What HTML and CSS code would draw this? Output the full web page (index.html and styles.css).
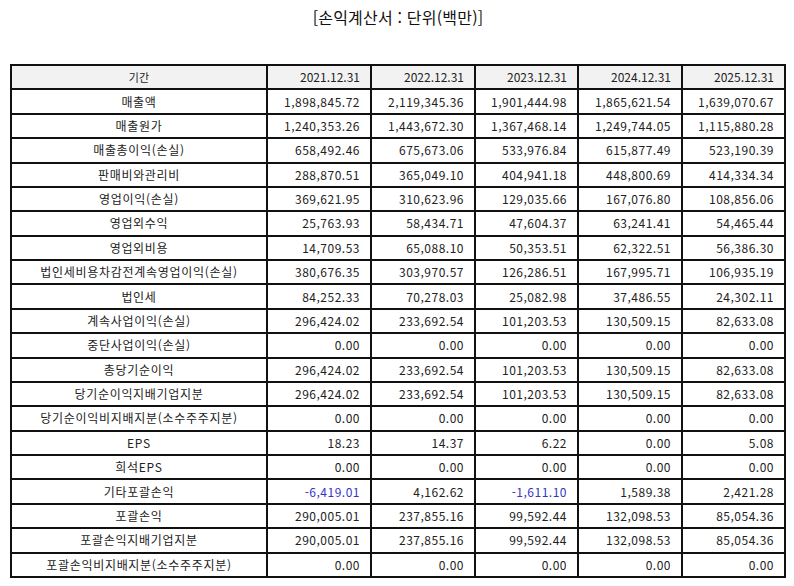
FILE: index.html
```html
<!DOCTYPE html>
<html lang="ko">
<head>
<meta charset="utf-8">
<title>손익계산서</title>
<link rel="stylesheet" href="styles.css">
</head>
<body>
<div class="page">
  <h1 class="title">[손익계산서 : 단위(백만)]</h1>
  <table class="fin">
    <colgroup>
      <col class="c-label"><col class="c-a"><col class="c-a"><col class="c-b"><col class="c-a"><col class="c-b">
    </colgroup>
    <thead>
      <tr class="head"><th>기간</th><th class="num">2021.12.31</th><th class="num">2022.12.31</th><th class="num">2023.12.31</th><th class="num">2024.12.31</th><th class="num">2025.12.31</th></tr>
    </thead>
    <tbody>
      <tr><td>매출액</td><td class="num">1,898,845.72</td><td class="num">2,119,345.36</td><td class="num">1,901,444.98</td><td class="num">1,865,621.54</td><td class="num">1,639,070.67</td></tr>
      <tr><td>매출원가</td><td class="num">1,240,353.26</td><td class="num">1,443,672.30</td><td class="num">1,367,468.14</td><td class="num">1,249,744.05</td><td class="num">1,115,880.28</td></tr>
      <tr><td>매출총이익(손실)</td><td class="num">658,492.46</td><td class="num">675,673.06</td><td class="num">533,976.84</td><td class="num">615,877.49</td><td class="num">523,190.39</td></tr>
      <tr><td>판매비와관리비</td><td class="num">288,870.51</td><td class="num">365,049.10</td><td class="num">404,941.18</td><td class="num">448,800.69</td><td class="num">414,334.34</td></tr>
      <tr><td>영업이익(손실)</td><td class="num">369,621.95</td><td class="num">310,623.96</td><td class="num">129,035.66</td><td class="num">167,076.80</td><td class="num">108,856.06</td></tr>
      <tr><td>영업외수익</td><td class="num">25,763.93</td><td class="num">58,434.71</td><td class="num">47,604.37</td><td class="num">63,241.41</td><td class="num">54,465.44</td></tr>
      <tr><td>영업외비용</td><td class="num">14,709.53</td><td class="num">65,088.10</td><td class="num">50,353.51</td><td class="num">62,322.51</td><td class="num">56,386.30</td></tr>
      <tr><td>법인세비용차감전계속영업이익(손실)</td><td class="num">380,676.35</td><td class="num">303,970.57</td><td class="num">126,286.51</td><td class="num">167,995.71</td><td class="num">106,935.19</td></tr>
      <tr><td>법인세</td><td class="num">84,252.33</td><td class="num">70,278.03</td><td class="num">25,082.98</td><td class="num">37,486.55</td><td class="num">24,302.11</td></tr>
      <tr><td>계속사업이익(손실)</td><td class="num">296,424.02</td><td class="num">233,692.54</td><td class="num">101,203.53</td><td class="num">130,509.15</td><td class="num">82,633.08</td></tr>
      <tr><td>중단사업이익(손실)</td><td class="num">0.00</td><td class="num">0.00</td><td class="num">0.00</td><td class="num">0.00</td><td class="num">0.00</td></tr>
      <tr><td>총당기순이익</td><td class="num">296,424.02</td><td class="num">233,692.54</td><td class="num">101,203.53</td><td class="num">130,509.15</td><td class="num">82,633.08</td></tr>
      <tr><td>당기순이익지배기업지분</td><td class="num">296,424.02</td><td class="num">233,692.54</td><td class="num">101,203.53</td><td class="num">130,509.15</td><td class="num">82,633.08</td></tr>
      <tr><td>당기순이익비지배지분(소수주주지분)</td><td class="num">0.00</td><td class="num">0.00</td><td class="num">0.00</td><td class="num">0.00</td><td class="num">0.00</td></tr>
      <tr><td>EPS</td><td class="num">18.23</td><td class="num">14.37</td><td class="num">6.22</td><td class="num">0.00</td><td class="num">5.08</td></tr>
      <tr><td>희석EPS</td><td class="num">0.00</td><td class="num">0.00</td><td class="num">0.00</td><td class="num">0.00</td><td class="num">0.00</td></tr>
      <tr><td>기타포괄손익</td><td class="num neg">-6,419.01</td><td class="num">4,162.62</td><td class="num neg">-1,611.10</td><td class="num">1,589.38</td><td class="num">2,421.28</td></tr>
      <tr><td>포괄손익</td><td class="num">290,005.01</td><td class="num">237,855.16</td><td class="num">99,592.44</td><td class="num">132,098.53</td><td class="num">85,054.36</td></tr>
      <tr><td>포괄손익지배기업지분</td><td class="num">290,005.01</td><td class="num">237,855.16</td><td class="num">99,592.44</td><td class="num">132,098.53</td><td class="num">85,054.36</td></tr>
      <tr><td>포괄손익비지배지분(소수주주지분)</td><td class="num">0.00</td><td class="num">0.00</td><td class="num">0.00</td><td class="num">0.00</td><td class="num">0.00</td></tr>
    </tbody>
  </table>
</div>
</body>
</html>
```
FILE: styles.css
```css
html, body {
  margin: 0;
  padding: 0;
  background: #ffffff;
}
.page {
  padding: 0 8px 0 10px;
  font-family: "Noto Sans CJK KR", "Noto Sans", sans-serif;
  color: #222222;
}
.title {
  margin: 0 0 30px 0;
  height: 34px;
  line-height: 34px;
  font-size: 16px;
  font-weight: normal;
  text-align: center;
  color: #111111;
  letter-spacing: 0.2px;
}
.fin {
  width: 776px;
  table-layout: fixed;
  border-collapse: separate;
  border-spacing: 0;
  border: 1px solid #111111;
  font-size: 12px;
}
.c-label { width: 256px; }
.c-a { width: 104px; }
.c-b { width: 103px; }
.fin th,
.fin td {
  border: 1px solid #111111;
  height: 24.38px;
  padding: 0 10px;
  box-sizing: border-box;
  text-align: center;
  font-weight: normal;
  white-space: nowrap;
  line-height: 14px;
  letter-spacing: 0.7px;
}
.fin .head th {
  background: #f2f2f2;
  font-size: 11px;
  letter-spacing: 0.2px;
}
.fin .num {
  text-align: right;
  font-size: 12px;
  letter-spacing: 0.5px;
}
.fin .head .num {
  font-size: 12px;
  letter-spacing: 0;
}
.fin .neg {
  color: #3535c8;
}
```
